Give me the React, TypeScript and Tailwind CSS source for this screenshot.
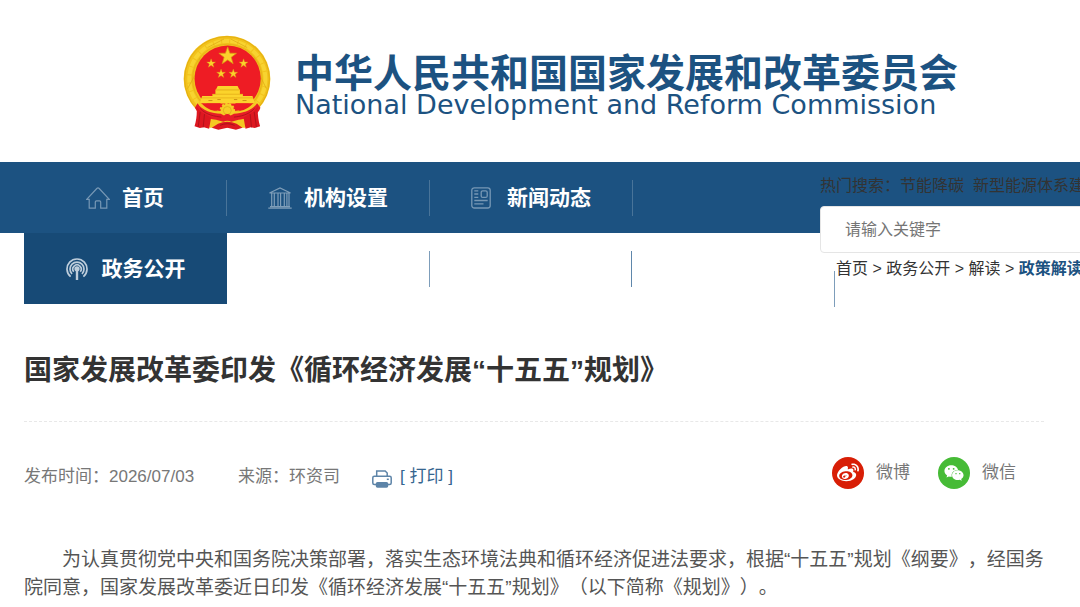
import { FaWeibo, FaWeixin } from "react-icons/fa";

const STAR = "0,-10 2.4,-3.2 9.5,-3.1 3.8,1.2 5.9,8.1 0,4 -5.9,8.1 -3.8,1.2 -9.5,-3.1 -2.4,-3.2";

const stars = [
  { x: 171, y: 92, scale: 2.8 },
  { x: 121, y: 114, scale: 1.4 },
  { x: 219, y: 114, scale: 1.4 },
  { x: 151, y: 145, scale: 1.4 },
  { x: 188, y: 145, scale: 1.4 },
];

const Emblem = () => (
  <svg viewBox="37 28 264 290" className="h-24 w-[88px] shrink-0" aria-hidden="true">
    <circle cx="169" cy="161" r="131" fill="#f2c21c" />
    <circle cx="169" cy="161" r="128" fill="none" stroke="#e3ae12" strokeWidth="3" />
    <circle cx="170" cy="161" r="115" fill="none" stroke="#f8d330" strokeWidth="12" strokeDasharray="22 3" />
    <circle cx="170" cy="161" r="105" fill="none" stroke="#e0ab18" strokeWidth="2" />
    <path d="M50 190 72 150 88 96M288 190 268 150 252 96M110 66l50-26M230 66l-50-26" fill="none" stroke="#dba514" strokeWidth="2" />
    <circle cx="171" cy="160" r="100" fill="#ee1c24" />
    {stars.map((star) => (
      <polygon
        key={`${star.x}-${star.y}`}
        points={STAR}
        transform={`translate(${star.x} ${star.y}) scale(${star.scale})`}
        fill="#fcd22c"
        stroke="#d99a10"
        strokeWidth="0.8"
      />
    ))}
    <path d="M141 182h60l6 12h-72zM134 193h74v15h-74z" fill="#fbd32b" />
    <path d="M136 194h70" stroke="#d99b10" strokeWidth="2" />
    <path d="M125 206h92v6h29l8 24H86l8-24h31z" fill="#fcd42d" />
    <path d="M94 218h154M125 207h92" stroke="#e0a515" strokeWidth="2" />
    <path d="M113 226h12M140 223h10M190 223h10M216 226h12" stroke="#cd9212" strokeWidth="3" />
    <path d="M88 234h62l-12 22H96zM194 234h60l-10 22h-38z" fill="#ec1c24" />
    <path d="M84 228c14 12 28 27 54 32h64c26-5 40-20 54-32l8 16-40 64H116l-36-64z" fill="#f5c823" />
    <path d="M108 236h126l-24 20h-80z" fill="#ec1c24" />
    <circle cx="170" cy="256" r="20" fill="#f7ce27" stroke="#f7ce27" strokeWidth="7" strokeDasharray="6 5" />
    <circle cx="170" cy="256" r="12" fill="none" stroke="#dba514" strokeWidth="2" />
    <path d="M80 234c14 24 44 29 70 32l10 5q10-9 20 0l10-5c26-3 54-8 70-32l10 14c-8 26-42 34-66 36l-22 6q-12-6-24 0l-22-6c-30-3-52-12-64-36z" fill="#e71d27" />
    <path d="M77 243l12 16 32 18-6 34-16-4-12 2-16-5c6-20 8-40 6-61zM262 243l-12 16-31 18 6 34 16-4 12 2 16-5c-6-20-8-40-7-61z" fill="#dd1720" />
    <path d="M88 260l-6 46M101 267l-4 40M251 260l7 46M239 267l4 40M88 250c18 20 46 24 64 26M252 250c-18 20-44 24-62 26" fill="none" stroke="#a81119" strokeWidth="2.5" />
    <path d="M142 296q28-12 56 0l18 12-20 6-26-6-27 6-20-6z" fill="#dd1721" />
    <path d="M148 301q22-10 44 0" fill="none" stroke="#9c1119" strokeWidth="2.5" />
  </svg>
);

const HomeIcon = () => (
  <svg viewBox="0 0 24 22" className="h-[22px] w-6 text-[#7798b5]" fill="none" stroke="currentColor" strokeWidth="1.2">
    <path d="M.7 12.4 10.8 1.5Q12 .4 13.2 1.5L23.3 12.4H20.8V21.2H14.7V15Q14.7 13.8 13.5 13.8H10.5Q9.3 13.8 9.3 15V21.2H3.2V12.4Z" />
  </svg>
);

const InstitutionIcon = () => (
  <svg viewBox="0 0 24 22" className="h-[22px] w-6 text-[#7f9eb9]" fill="none" stroke="currentColor" strokeWidth="1.2">
    <path d="M1.5 6 12 1l10.5 5zM.3 21.2h23.4M2 19.6h20M3.7 6v13.6M6.3 6v13.6M10 6v13.6M12.6 6v13.6M16.3 6v13.6M18.9 6v13.6M21 6v13.6" />
  </svg>
);

const NewsIcon = () => (
  <svg viewBox="0 0 24 22" className="h-[22px] w-6 text-[#7798b5]" fill="none" stroke="currentColor" strokeWidth="1.3">
    <rect x=".8" y=".8" width="18.4" height="20.2" rx="2.5" />
    <rect x="10.2" y="3.8" width="6" height="6.6" rx="1.5" />
    <path d="M3.3 3.8h4M3.3 7h4M3.3 10.3h4M3.3 13.5h13.4M3.3 16.8h9.2" />
  </svg>
);

const BroadcastIcon = () => (
  <svg viewBox="0 0 24 22" className="h-[22px] w-6 text-[#bdcddb]" fill="none" stroke="currentColor" strokeWidth="1.7">
    <path d="M4.6 18.7A10 10 0 1 1 17.4 18.7M6 16A7 7 0 1 1 16 16M7.7 13.7A4.2 4.2 0 1 1 14.3 13.7" />
    <circle cx="11" cy="10.8" r="1.8" fill="currentColor" />
    <path d="M11 11v11" strokeWidth="2.4" />
  </svg>
);

const PrintIcon = () => (
  <svg viewBox="0 0 20 18" className="mt-1 h-[18px] w-5 text-[#5d84a8]" fill="none" stroke="currentColor" strokeWidth="1.5">
    <path d="M4.7 6V1h8.5l2 2v3" />
    <path d="M4.5 14.5H2.3Q.8 14.5.8 13V7.8Q.8 6.2 2.3 6.2h15.3q1.6 0 1.6 1.6V13q0 1.5-1.6 1.5h-2" />
    <rect x="4.5" y="12.8" width="11" height="4.2" rx="1" fill="currentColor" />
    <path d="M14.8 9.3h2" />
  </svg>
);

const navItems = [
  { label: "首页", icon: <HomeIcon /> },
  { label: "机构设置", icon: <InstitutionIcon /> },
  { label: "新闻动态", icon: <NewsIcon /> },
];

const Navigation = () => (
  <nav className="text-[21px] font-bold text-white">
    <ul className="flex h-[71px] items-center bg-[#1c5281] pl-6">
      {navItems.map((item) => (
        <li key={item.label} className="w-[203px] shrink-0 border-r border-[#497499]">
          <a href="#" className="flex h-9 items-center justify-center gap-3">
            {item.icon}
            {item.label}
          </a>
        </li>
      ))}
    </ul>
    <ul className="flex h-[71px] items-center pl-6">
      <li className="w-[203px] shrink-0">
        <a href="#" className="flex h-[71px] items-center justify-center gap-3 bg-[#174a76]">
          <BroadcastIcon />
          政务公开
        </a>
      </li>
      <li className="h-9 w-[203px] shrink-0 border-r border-[#7d9dba]" />
      <li className="h-9 w-[202px] shrink-0 border-r border-[#5f87ab]" />
      <li className="mt-10 h-9 w-[203px] shrink-0 border-r border-[#7d9dba]" />
    </ul>
  </nav>
);

const SearchPanel = () => (
  <div className="absolute top-3 right-0 left-[820px] overflow-hidden text-base whitespace-nowrap text-[#333]">
    <p className="leading-6">
      热门搜索：<a href="#">节能降碳</a>&nbsp; <a href="#">新型能源体系建设</a>
    </p>
    <input
      type="text"
      aria-label="搜索"
      placeholder="请输入关键字"
      className="mt-2 block h-[47px] w-[360px] rounded-sm border border-[#e5e5e5] bg-white px-6 outline-none placeholder:text-[#757575]"
    />
    <div className="mt-1 pl-4 leading-6">
      <a href="#">首页</a> &gt; <a href="#">政务公开</a> &gt; <a href="#">解读</a> &gt;{" "}
      <a href="#" className="font-bold text-[#1c5281]">
        政策解读
      </a>
    </div>
  </div>
);

const ArticleMeta = () => (
  <div className="flex items-center text-[17px] text-[#777]">
    <div className="flex items-center pt-2">
      <span>
        发布时间：<time>2026/07/03</time>
      </span>
      <span className="ml-11">来源：环资司</span>
      <button type="button" className="ml-8 flex items-center gap-2 text-[#35658f]">
        <PrintIcon />
        <span>[ 打印 ]</span>
      </button>
    </div>
    <div className="mr-7 ml-auto flex items-center gap-7">
      <a href="#" className="flex items-center gap-3">
        <span className="flex size-8 items-center justify-center rounded-full bg-[#d81e06] text-white">
          <FaWeibo size={22} />
        </span>
        微博
      </a>
      <a href="#" className="flex items-center gap-3">
        <span className="flex size-8 items-center justify-center rounded-full bg-[#46bb36] text-white">
          <FaWeixin size={20} />
        </span>
        微信
      </a>
    </div>
  </div>
);

export default function App() {
  return (
    <div
      lang="zh-CN"
      className="overflow-x-hidden bg-white font-['Liberation_Sans','Noto_Sans_CJK_SC',sans-serif] [text-spacing-trim:space-all]"
    >
      <header>
        <div className="flex items-start gap-6 pt-[35px] pb-[31px] pl-[183px]">
          <Emblem />
          <h1 className="pt-4 whitespace-nowrap text-[#1c5281]">
            <span className="block text-[39px] leading-[46px] font-bold">
              中华人民共和国国家发展和改革委员会
            </span>
            <span className="block font-['DejaVu_Sans',sans-serif] text-[27px] leading-4">
              National Development and Reform Commission
            </span>
          </h1>
        </div>
        <div className="relative">
          <Navigation />
          <SearchPanel />
        </div>
      </header>

      <main className="pr-9 pl-6">
        <h2 className="pt-[46px] pb-[29px] text-[28px] leading-[42px] font-bold text-[#333]">
          国家发展改革委印发《循环经济发展“十五五”规划》
        </h2>
        <div className="border-t border-dashed border-[#e8e8e8] pt-[34px]">
          <ArticleMeta />
        </div>
        <p className="pt-14 indent-[2em] text-[19px] leading-7 text-[#555]">
          为认真贯彻党中央和国务院决策部署，落实生态环境法典和循环经济促进法要求，根据“十五五”规划《纲要》，经国务院同意，国家发展改革委近日印发《循环经济发展“十五五”规划》（以下简称《规划》）。
        </p>
      </main>
    </div>
  );
}
